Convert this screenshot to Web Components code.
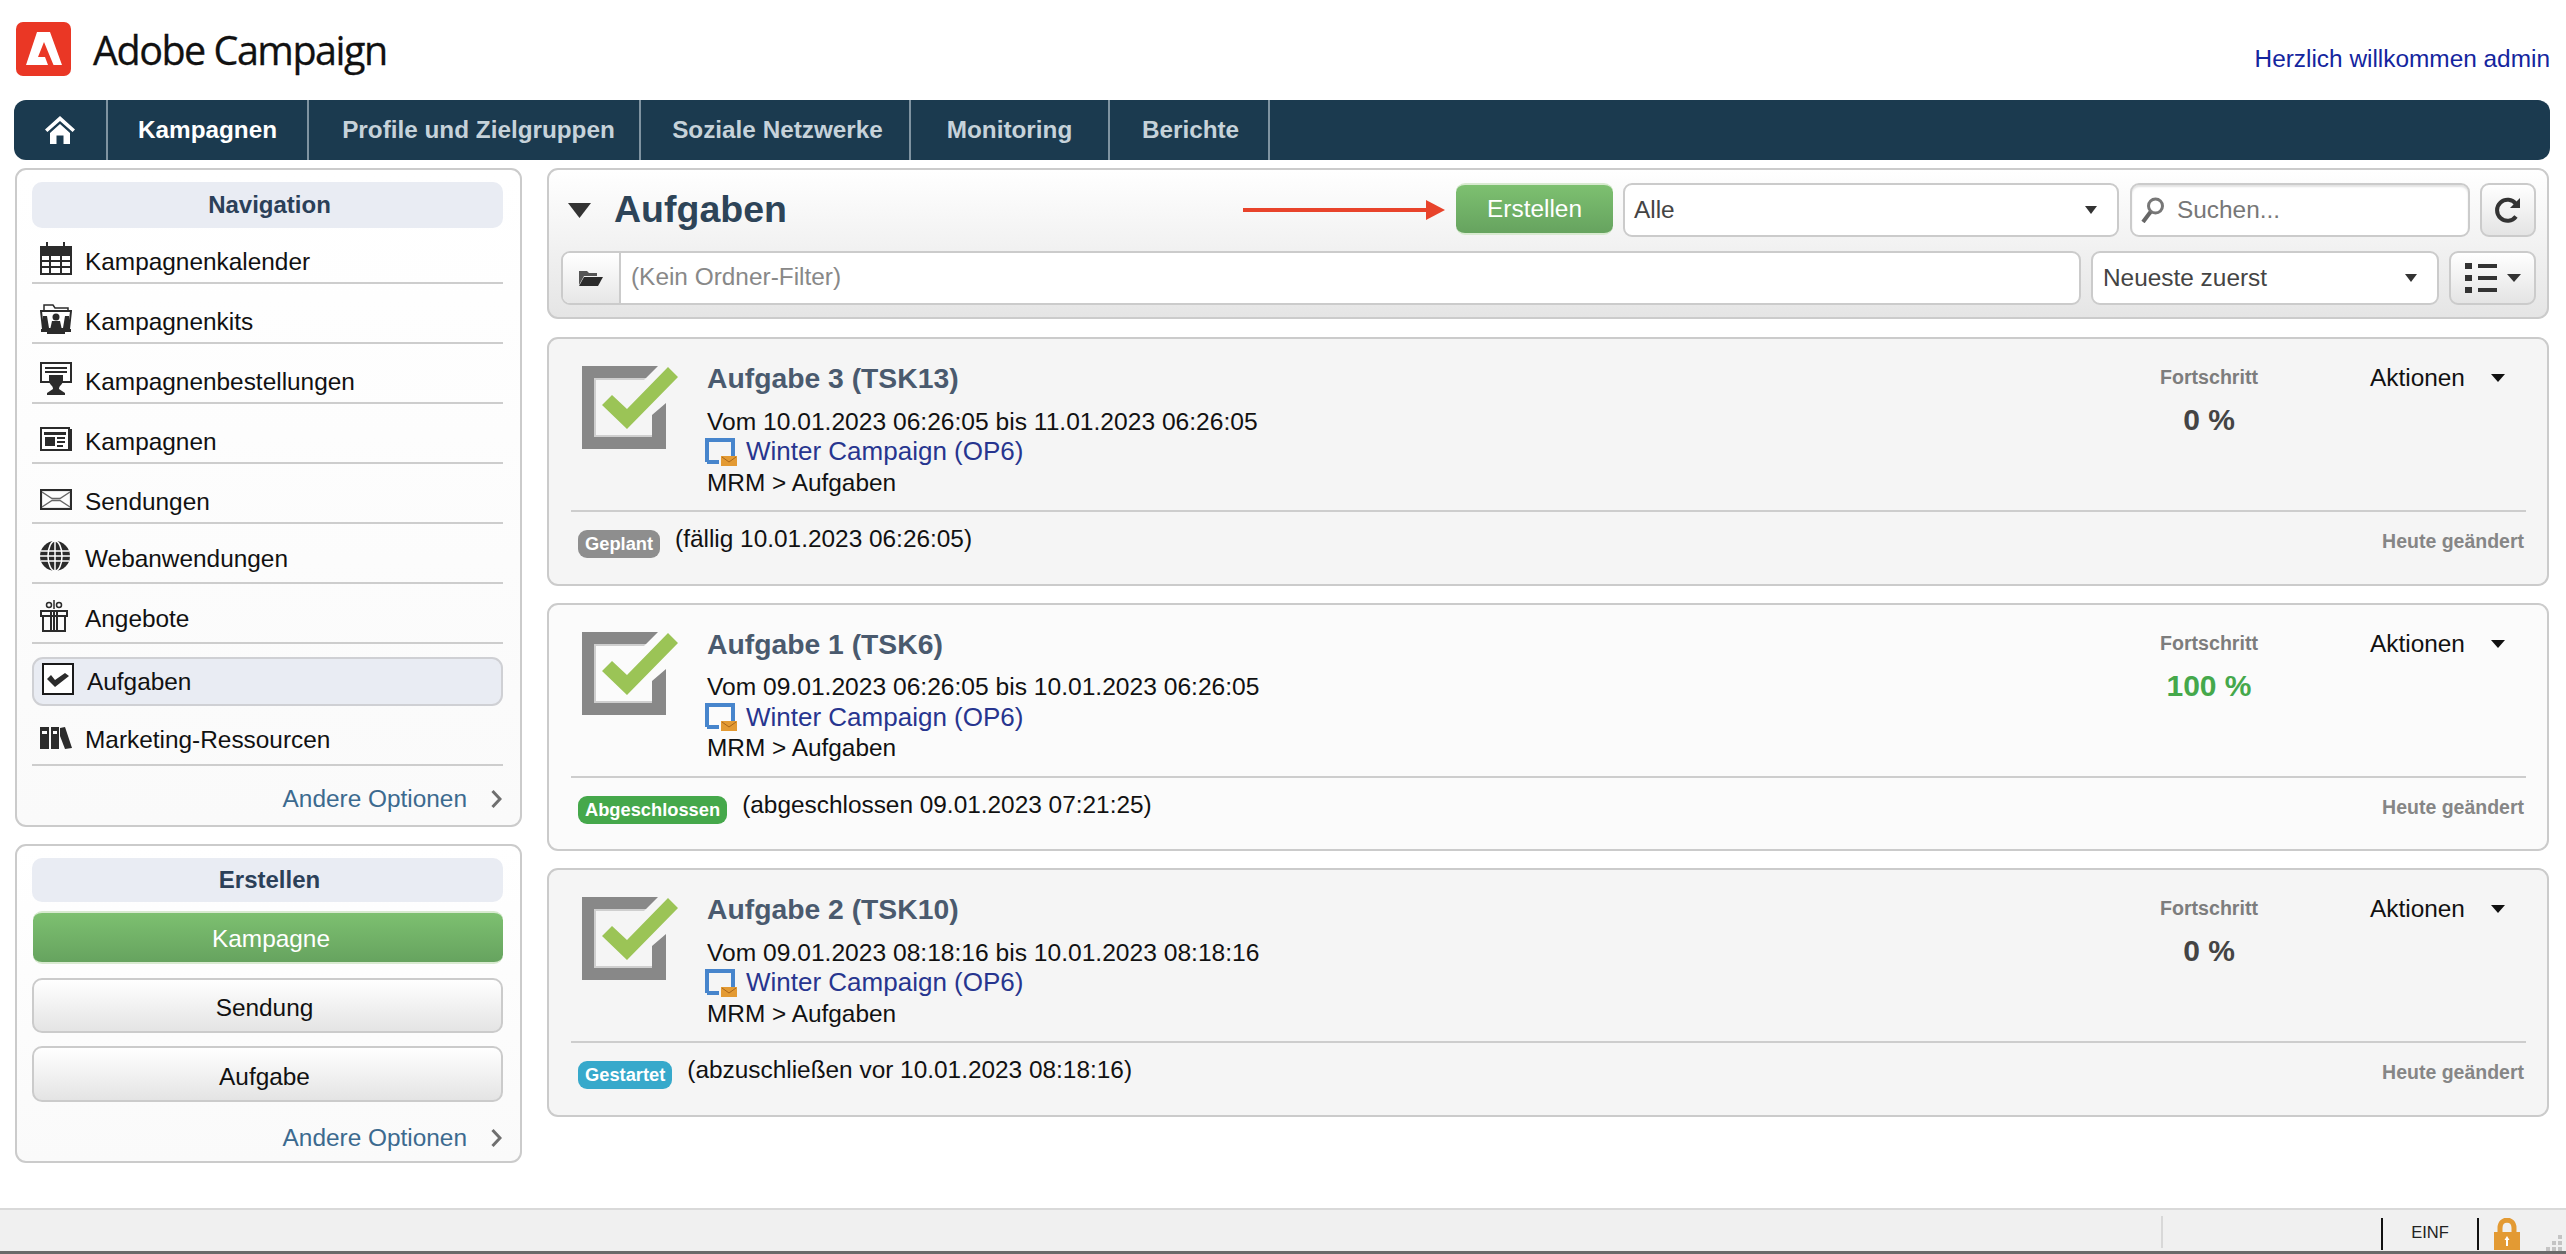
<!DOCTYPE html>
<html lang="de">
<head>
<meta charset="utf-8">
<title>Adobe Campaign</title>
<style>
  html, body { margin: 0; height: 100%; background: #fff; }
  body { font: 24.4px "Liberation Sans", Arial, sans-serif; color: #111; overflow: hidden; }
</style>
</head>
<body>
<ac-app>
  <ac-header></ac-header>
  <ac-nav>
    <ac-nav-item icon="home" style="width:94px"></ac-nav-item>
    <ac-nav-item active style="width:201px">Kampagnen</ac-nav-item>
    <ac-nav-item style="width:332px;padding-left:9px">Profile und Zielgruppen</ac-nav-item>
    <ac-nav-item style="width:270px;padding-left:5px">Soziale Netzwerke</ac-nav-item>
    <ac-nav-item style="width:199px">Monitoring</ac-nav-item>
    <ac-nav-item style="width:160px;padding-left:3px">Berichte</ac-nav-item>
  </ac-nav>
  <ac-layout>
    <ac-sidebar slot="side">
      <ac-panel heading="Navigation" style="--pb:3px">
        <ac-nav-row icon="calendar">Kampagnenkalender</ac-nav-row>
        <ac-nav-row icon="kits">Kampagnenkits</ac-nav-row>
        <ac-nav-row icon="orders">Kampagnenbestellungen</ac-nav-row>
        <ac-nav-row icon="news">Kampagnen</ac-nav-row>
        <ac-nav-row icon="mail">Sendungen</ac-nav-row>
        <ac-nav-row icon="globe" style="padding-top:12px">Webanwendungen</ac-nav-row>
        <ac-nav-row icon="gift" style="padding-top:12px">Angebote</ac-nav-row>
        <ac-nav-row icon="check" selected>Aufgaben</ac-nav-row>
        <ac-nav-row icon="books" tight>Marketing-Ressourcen</ac-nav-row>
        <ac-more style="margin-top:10px"></ac-more>
      </ac-panel>
      <ac-panel heading="Erstellen" style="--pb:0px;--hh:44px">
        <ac-button primary style="height:53px;margin:9px 0 14px 1px;width:470px;padding:3px 0 0 6px">Kampagne</ac-button>
        <ac-button style="height:55px;margin-bottom:13px;padding:5px 6px 0 0">Sendung</ac-button>
        <ac-button style="height:56px;padding:5px 6px 0 0">Aufgabe</ac-button>
        <ac-more style="margin-top:13px"></ac-more>
      </ac-panel>
    </ac-sidebar>
    <ac-toolbar></ac-toolbar>
    <ac-task-card name="Aufgabe 3" code="(TSK13)" dates="Vom 10.01.2023 06:26:05 bis 11.01.2023 06:26:05"
      progress="0 %" status="Geplant" tone="#8e8e8e" note="(fällig 10.01.2023 06:26:05)"></ac-task-card>
    <ac-task-card name="Aufgabe 1" code="(TSK6)" dates="Vom 09.01.2023 06:26:05 bis 10.01.2023 06:26:05" light
      progress="100 %" done status="Abgeschlossen" tone="#45a84b" note="(abgeschlossen 09.01.2023 07:21:25)"></ac-task-card>
    <ac-task-card name="Aufgabe 2" code="(TSK10)" dates="Vom 09.01.2023 08:18:16 bis 10.01.2023 08:18:16"
      progress="0 %" status="Gestartet" tone="#37a9cb" note="(abzuschließen vor 10.01.2023 08:18:16)"></ac-task-card>
  </ac-layout>
  <ac-status-bar></ac-status-bar>
</ac-app>

<script>
// all the little pictograms in one place
const ICONS = {
  home: `<svg width="30" height="28" viewBox="0 0 30 28" fill="#fff"><path d="M15 0 30 13.5 27.6 16 15 5 2.400 16 0 13.500Z"/><path d="M5 17 15 8 25 17V28H18.500V19.500H11.500V28H5Z"/></svg>`,
  calendar: `<svg width="32" height="33" viewBox="0 0 32 33" fill="#2b2b2b"><rect x="6" width="2" height="6"/><rect x="23" width="2" height="6"/><rect y="4" width="32" height="8"/><path fill-rule="evenodd" d="M0 12H32V33H0ZM2 14V18H9V14ZM11 14V18H20V14ZM22 14V18H30V14ZM2 20V24H9V20ZM11 20V24H20V20ZM22 20V24H30V20ZM2 26V31H9V26ZM11 26V31H20V26ZM22 26V31H30V26Z"/></svg>`,
  kits: `<svg width="32" height="30" viewBox="0 0 32 30" fill="#2b2b2b"><path d="M4 8V1H13L15 4H28V8" fill="none" stroke="#2b2b2b" stroke-width="1.500"/><path d="M1 7H31L29 25H3Z" fill="#fff" stroke="#2b2b2b" stroke-width="2"/><path d="M3 12 7 12 9 24 3 24ZM29 12 25 12 23 24 29 24Z"/><circle cx="16" cy="13" r="3.500"/><path d="M10 26 12 17H20L22 26Z"/><rect x="1" y="25" width="30" height="3"/><rect x="7" y="28" width="18" height="2"/></svg>`,
  orders: `<svg width="32" height="33" viewBox="0 0 32 33" fill="#2b2b2b"><rect x="1" y="1" width="30" height="19" fill="#fff" stroke="#2b2b2b" stroke-width="2"/><rect x="5" y="5" width="22" height="2"/><rect x="5" y="9" width="22" height="2"/><path d="M9 13H23V18C23 23 19 23 19 27L25 31V33H7V31L13 27C13 23 9 23 9 18Z"/></svg>`,
  news: `<svg width="32" height="24" viewBox="0 0 32 24" fill="#2b2b2b"><path d="M28 2H32V24H28Z"/><rect x="1" y="1" width="28" height="22" fill="#fff" stroke="#2b2b2b" stroke-width="2"/><rect x="4" y="5" width="22" height="3"/><rect x="5" y="10" width="10" height="9"/><rect x="17" y="10" width="8" height="2"/><rect x="17" y="14" width="8" height="2"/><rect x="17" y="18" width="6" height="2"/></svg>`,
  mail: `<svg width="32" height="21" viewBox="0 0 32 21" fill="none" stroke="#2b2b2b"><rect x="1" y="1" width="30" height="19" stroke-width="2.200"/><path d="M2 3 12 9.500H20L30 3M2 18 12 11.500H20L30 18" stroke-width="1.400" stroke="#666"/></svg>`,
  globe: `<svg width="30" height="30" viewBox="0 0 30 30"><circle cx="15" cy="15" r="15" fill="#2b2b2b"/><g fill="none" stroke="#fff" stroke-width="1.500"><path d="M1 10H29M0 15H30M1 20H29M15 0V30"/><ellipse cx="15" cy="15" rx="7" ry="15"/></g></svg>`,
  gift: `<svg width="28" height="32" viewBox="0 0 28 32" fill="none" stroke="#2b2b2b" stroke-width="2"><rect x="1" y="11" width="26" height="5"/><path d="M3 16V31H25V16M14 11V31M11 11V31M17 11V31"/><circle cx="9" cy="5" r="2.500" stroke-width="1.500"/><circle cx="19" cy="5" r="2.500" stroke-width="1.500"/><path d="M14 0V9" stroke-width="1.500"/></svg>`,
  check: `<svg width="32" height="32" viewBox="0 0 32 32"><rect x="1" y="1" width="30" height="30" fill="#fff" stroke="#1a1a1a" stroke-width="2"/><path d="M5 16 9 12 13 17 23 10 27 13 13 24Z" fill="#2b2b2b"/></svg>`,
  books: `<svg width="32" height="23" viewBox="0 0 32 23" fill="#2b2b2b"><path fill-rule="evenodd" d="M0 1H9V23H0ZM2 5V8H7V5Z"/><path fill-rule="evenodd" d="M11 1H19V23H11ZM13 5V8H17V5Z"/><path d="M20 2 25 1 32 22 25 23 20 10Z"/></svg>`
};

class AcIcon extends HTMLElement {
  constructor() {
    super();
    this.attachShadow({ mode: "open" });
  }

  connectedCallback() {
    const name = this.getAttribute("name");
    this.shadowRoot.innerHTML = `
      <style>
        :host { display: inline-flex; align-items: center; line-height: 0; }
      </style>
      ${ICONS[name] || ""}
    `;
  }
}

class AcApp extends HTMLElement {
  constructor() {
    super();
    this.attachShadow({ mode: "open" });
    this.shadowRoot.innerHTML = `
      <style>
        :host { display: flex; flex-direction: column; height: 100vh; }
        ::slotted(ac-status-bar) { margin-top: auto; }
      </style>
      <slot></slot>
    `;
  }
}

class AcHeader extends HTMLElement {
  constructor() {
    super();
    this.attachShadow({ mode: "open" });
    this.shadowRoot.innerHTML = `
      <style>
        :host { display: flex; height: 100px; padding: 22px 16px 0 16px; box-sizing: border-box; }
        .brand {
          margin: 2px 0 0 22px;
          font: 39.500px/52px "Open Sans", sans-serif;
          letter-spacing: -1.500px;
          color: #111;
          -webkit-text-stroke: 0.3px #111;
        }
        a {
          margin-left: auto;
          margin-top: 23px;
          line-height: 28px;
          color: #14259e;
          text-decoration: none;
          font-size: 24.400px;
        }
      </style>
      <svg width="55" height="54" viewBox="0 0 55 54">
        <rect width="55" height="54" rx="7" fill="#ea3725"/>
        <path fill="#fff" d="M21 10H34L46 43H37.500L28 20 22 35H29L32 43H10Z"/>
      </svg>
      <span class="brand">Adobe Campaign</span>
      <a>Herzlich willkommen admin</a>
    `;
  }
}

class AcNav extends HTMLElement {
  constructor() {
    super();
    this.attachShadow({ mode: "open" });
    this.shadowRoot.innerHTML = `
      <style>
        :host {
          display: flex;
          height: 60px;
          margin: 0 16px 8px 14px;
          background: #1b3a4f;
          border-radius: 12px;
          overflow: hidden;
        }
      </style>
      <slot></slot>
    `;
  }
}

class AcNavItem extends HTMLElement {
  constructor() {
    super();
    this.attachShadow({ mode: "open" });
  }

  connectedCallback() {
    const icon = this.getAttribute("icon");
    this.shadowRoot.innerHTML = `
      <style>
        :host {
          display: flex;
          align-items: center;
          justify-content: center;
          box-sizing: border-box;
          border-right: 2px solid #7f93a1;
          font-size: 24.300px;
          font-weight: bold;
          color: #c6d2da;
        }
        :host([active]) { color: #fff; }
      </style>
      ${icon ? `<ac-icon name="${icon}"></ac-icon>` : ""}
      <slot></slot>
    `;
  }
}

class AcLayout extends HTMLElement {
  constructor() {
    super();
    this.attachShadow({ mode: "open" });
    this.shadowRoot.innerHTML = `
      <style>
        :host { display: flex; gap: 25px; padding: 0 17px 0 15px; }
        main { flex: 1; min-width: 0; display: flex; flex-direction: column; gap: 17px; }
        ::slotted(ac-toolbar) { margin-bottom: 1px; }
      </style>
      <slot name="side"></slot>
      <main><slot></slot></main>
    `;
  }
}

class AcSidebar extends HTMLElement {
  constructor() {
    super();
    this.attachShadow({ mode: "open" });
    this.shadowRoot.innerHTML = `
      <style>
        :host { display: flex; flex-direction: column; gap: 17px; width: 507px; flex: none; }
      </style>
      <slot></slot>
    `;
  }
}

class AcPanel extends HTMLElement {
  constructor() {
    super();
    this.attachShadow({ mode: "open" });
  }

  connectedCallback() {
    this.shadowRoot.innerHTML = `
      <style>
        :host {
          display: flex;
          flex-direction: column;
          box-sizing: border-box;
          padding: 12px 17px var(--pb, 0) 15px;
          border: 2px solid #cbcbcb;
          border-radius: 11px;
          background: linear-gradient(#fff, #fafafa);
        }
        h2 {
          margin: 0;
          height: var(--hh, 46px);
          padding-left: 4px;
          line-height: var(--hh, 46px);
          text-align: center;
          font-size: 24px;
          font-weight: bold;
          color: #2b4058;
          background: #e9ecf3;
          border-radius: 10px;
        }
        ::slotted(ac-nav-row:first-of-type) { margin-top: -4px; }
      </style>
      <h2>${this.getAttribute("heading")}</h2>
      <slot></slot>
    `;
  }
}

class AcNavRow extends HTMLElement {
  constructor() {
    super();
    this.attachShadow({ mode: "open" });
  }

  connectedCallback() {
    this.shadowRoot.innerHTML = `
      <style>
        :host {
          display: flex;
          align-items: center;
          box-sizing: border-box;
          height: 60px;
          padding: 17px 0 0 8px;
          border-bottom: 2px solid #cdcdcd;
        }
        :host([tight]) { height: 60px; padding-top: 10px; }
        :host([selected]) {
          height: 49px;
          margin-top: 13px;
          padding-top: 0;
          padding-left: 8px;
          border: 2px solid #cfd0d4;
          border-radius: 11px;
          background: #e9ecf3;
        }
        .ico { width: 45px; flex: none; }
      </style>
      <span class="ico"><ac-icon name="${this.getAttribute("icon")}"></ac-icon></span>
      <slot></slot>
    `;
  }
}

class AcMore extends HTMLElement {
  constructor() {
    super();
    this.attachShadow({ mode: "open" });
    this.shadowRoot.innerHTML = `
      <style>
        :host {
          display: flex;
          align-items: center;
          justify-content: flex-end;
          gap: 24px;
          height: 46px;
          padding-right: 1px;
          color: #3c6a8f;
        }
      </style>
      <span>Andere Optionen</span>
      <svg width="11" height="20" viewBox="0 0 11 20" fill="none" stroke="#6f6f6f" stroke-width="3"><path d="M1.500 2 9 10 1.500 18"/></svg>
    `;
  }
}

class AcButton extends HTMLElement {
  constructor() {
    super();
    this.attachShadow({ mode: "open" });
    this.shadowRoot.innerHTML = `
      <style>
        :host {
          display: flex;
          align-items: center;
          justify-content: center;
          box-sizing: border-box;
          border: 2px solid #cbcbcb;
          border-radius: 10px;
          background: linear-gradient(#fff, #e4e4e4);
          color: #111;
          flex: none;
        }
        :host([primary]) {
          border: 0;
          border-top: 2px solid #d8ead0;
          border-bottom: 2px solid #d8ead0;
          border-radius: 9px;
          background: linear-gradient(#7dc070, #66a35f);
          color: #fff;
        }
      </style>
      <slot></slot>
    `;
  }
}

class AcToolbar extends HTMLElement {
  constructor() {
    super();
    this.attachShadow({ mode: "open" });
    const caret = `<svg class="caret" width="12" height="8" viewBox="0 0 12 8" fill="#333"><path d="M0 0H12L6 8Z"/></svg>`;
    this.shadowRoot.innerHTML = `
      <style>
        :host {
          display: block;
          box-sizing: border-box;
          height: 151px;
          padding: 13px 11px 0 12px;
          border: 2px solid #cbcbcb;
          border-radius: 11px;
          background: linear-gradient(#fff, #e5e5e5);
        }
        .row { display: flex; align-items: flex-start; }
        .row + .row { margin-top: 14px; }
        .turn { margin: 20px 23px 0 7px; flex: none; }
        h1 { margin: 2px 0 0; font-size: 37.500px; line-height: 48px; color: #2d4458; font-weight: bold; }
        .arrow { margin: 17px 11px 0 auto; flex: none; }
        ac-button { height: 52px; width: 157px; margin-right: 10px; }
        .box {
          display: flex;
          align-items: center;
          box-sizing: border-box;
          height: 54px;
          border: 2px solid #cbcbcb;
          border-radius: 9px;
          background: #fff;
          color: #444;
          flex: none;
          padding: 0 20px 0 9px;
        }
        .caret { margin-left: auto; }
        .search { color: #777; padding: 0 0 0 9px; box-shadow: inset 0 2px 2px #e2e2e2; }
        .search svg { margin-right: 12px; }
        .btn {
          display: flex;
          align-items: center;
          justify-content: center;
          box-sizing: border-box;
          height: 54px;
          border: 2px solid #cbcbcb;
          border-radius: 9px;
          background: linear-gradient(#fff, #e4e4e4);
          flex: none;
        }
        .filter { display: flex; flex: 1; height: 54px; box-sizing: border-box; border: 2px solid #cbcbcb; border-radius: 9px; background: #fff; margin-right: 10px; overflow: hidden; }
        .filter .folder { width: 58px; display: flex; align-items: center; justify-content: center; border-right: 2px solid #cbcbcb; background: linear-gradient(#fff, #e6e6e6); padding-right: 2px; box-sizing: border-box; }
        .filter span { padding-left: 10px; line-height: 48px; color: #888; }
      </style>
      <div class="row">
        <svg class="turn" width="23" height="15" viewBox="0 0 23 15" fill="#333"><path d="M0 0H23L11.500 15Z"/></svg>
        <h1>Aufgaben</h1>
        <svg class="arrow" width="202" height="20" viewBox="0 0 202 20" fill="#e8432b"><rect y="8" width="186" height="4"/><path d="M183 0 202 10 183 20Z"/></svg>
        <ac-button primary>Erstellen</ac-button>
        <div class="box" style="width:496px;margin-right:11px">Alle${caret}</div>
        <div class="box search" style="width:340px;margin-right:10px">
          <svg width="24" height="26" viewBox="0 0 24 26" fill="none" stroke="#777"><circle cx="14.500" cy="9" r="7" stroke-width="3"/><path d="M9.500 15 2 25" stroke-width="4" stroke="#666"/></svg>
          Suchen...
        </div>
        <div class="btn" style="width:56px">
          <svg width="26" height="26" viewBox="0 0 26 26" fill="none"><path d="M21 7A10.500 10.500 0 1 0 21 19.500" stroke="#333" stroke-width="4"/><path d="M25 1V11H15Z" fill="#333"/></svg>
        </div>
      </div>
      <div class="row">
        <div class="filter">
          <div class="folder"><svg width="25" height="16" viewBox="0 0 25 16"><path d="M1 15V1H9L11 3H19V6H6L1 15Z" fill="#555"/><path d="M6 7H25L20 16H1Z" fill="#2b2b2b"/></svg></div>
          <span>(Kein Ordner-Filter)</span>
        </div>
        <div class="box" style="width:348px;margin-right:10px;padding:0 20px 0 10px">Neueste zuerst${caret}</div>
        <div class="btn" style="width:87px;gap:10px">
          <svg width="32" height="30" viewBox="0 0 32 30" fill="#333"><rect width="7" height="6"/><rect x="13" y="1" width="19" height="4"/><rect y="12" width="7" height="6"/><rect x="13" y="13" width="19" height="4"/><rect y="24" width="7" height="6"/><rect x="13" y="25" width="19" height="4"/></svg>
          <svg width="14" height="8" viewBox="0 0 14 8" fill="#333"><path d="M0 0H14L7 8Z"/></svg>
        </div>
      </div>
    `;
  }
}

class AcTaskCard extends HTMLElement {
  constructor() {
    super();
    this.attachShadow({ mode: "open" });
  }

  connectedCallback() {
    const attr = (n) => this.getAttribute(n);
    this.shadowRoot.innerHTML = `
      <style>
        :host {
          display: block;
          box-sizing: border-box;
          height: 248.500px;
          border: 2px solid #cbcbcb;
          border-radius: 11px;
          background: #f5f5f5;
        }
        :host([light]) { background: #fbfbfb; }
        .top { display: flex; height: 171px; box-sizing: border-box; padding: 21px 42px 0 33px; }
        .task { flex: none; margin: 6px 29px 0 0; }
        .body { flex: 1; min-width: 0; }
        h3 { margin: 1px 0 10px; font-size: 28.300px; line-height: 34px; color: #4a5a6e; font-weight: bold; }
        .line { line-height: 31.500px; margin-top: -1px; }
        .dates { font-size: 24.600px; margin-top: 0; padding-top: 0.500px; }
        .camp { display: flex; align-items: center; color: #27358f; font-size: 26px; }
        .camp svg { margin: 0 9px 0 -2px; flex: none; }
        .prog { flex: none; width: 120px; text-align: center; padding-top: 5px; }
        .prog small { display: block; font-size: 19.600px; font-weight: bold; line-height: 24px; color: #7d7d7d; }
        .prog b { display: block; margin-top: 13px; font-size: 30px; line-height: 36px; color: #444; }
        :host([done]) .prog b { color: #45a84b; }
        .act { flex: none; width: 135px; margin-left: 101px; display: flex; justify-content: space-between; align-items: center; height: 32px; margin-top: 2px; }
        hr { margin: 0 21px 0 22px; border: 0; border-top: 2px solid #cdcdcd; }
        .foot { display: flex; padding: 18px 23px 0 29px; }
        .pill {
          height: 28px;
          line-height: 27px;
          padding: 0 7px;
          border-radius: 9px;
          color: #fff;
          font-size: 18.300px;
          font-weight: bold;
          flex: none;
        }
        .note { margin: -5px 0 0 15px; line-height: 28px; }
        .changed { margin-left: auto; margin-top: -3px; line-height: 28px; font-size: 19.500px; font-weight: bold; color: #868686; }
      </style>
      <div class="top">
        <svg class="task" width="96" height="84" viewBox="0 0 96 84">
          <path fill="#888" d="M0 0H76L64 12H12V71H70V49L84 37V83H0Z"/>
          <path fill="#cfcfcf" d="M12 12H64L62 14H14V69H70V71H12Z"/>
          <path fill="#9bc456" d="M20 39 30 29 45 43 86 1 96 11 45 63Z"/>
        </svg>
        <div class="body">
          <h3>${attr("name")} ${attr("code")}</h3>
          <div class="line dates">${attr("dates")}</div>
          <div class="line camp">
            <svg width="32" height="28" viewBox="0 0 32 28"><path fill="none" stroke="#4785cc" stroke-width="4" d="M2 24V2H28V18M2 24H14"/><rect x="16" y="18" width="16" height="10" fill="#e39a33"/><path fill="none" stroke="#a9661a" d="M17 19 24 24 31 19"/></svg>
            Winter Campaign (OP6)
          </div>
          <div class="line">MRM &gt; Aufgaben</div>
        </div>
        <div class="prog"><small>Fortschritt</small><b>${attr("progress")}</b></div>
        <div class="act">Aktionen
          <svg width="14" height="8" viewBox="0 0 14 8" fill="#111"><path d="M0 0H14L7 8Z"/></svg>
        </div>
      </div>
      <hr>
      <div class="foot">
        <span class="pill" style="background:${attr("tone")}">${attr("status")}</span>
        <span class="note">${attr("note")}</span>
        <span class="changed">Heute geändert</span>
      </div>
    `;
  }
}

class AcStatusBar extends HTMLElement {
  constructor() {
    super();
    this.attachShadow({ mode: "open" });
    this.shadowRoot.innerHTML = `
      <style>
        :host {
          display: flex;
          box-sizing: border-box;
          height: 46px;
          padding-top: 6px;
          border-top: 2px solid #d9d9d9;
          border-bottom: 3px solid #6a6a6a;
          background: #f0f0f0;
          position: relative;
        }
        .soft { width: 2px; height: 32px; background: #d8d8d8; margin-left: 2161px; }
        .hard { width: 2px; height: 32px; margin-top: 2px; background: #111; }
        .einf { width: 94px; text-align: center; font-size: 16.500px; line-height: 32px; color: #222; }
        .lock { margin: 2px 0 0 15px; }
        .grip { position: absolute; right: 4px; bottom: 0; }
      </style>
      <div class="soft"></div>
      <div class="hard" style="margin-left:218px"></div>
      <div class="einf">EINF</div>
      <div class="hard"></div>
      <svg class="lock" width="26" height="32" viewBox="0 0 26 32">
        <path fill="none" stroke="#e39a33" stroke-width="5" d="M6 15V10C6 -0.500 20 -0.500 20 10V15"/>
        <rect y="14" width="26" height="18" fill="#e39a33"/>
        <path fill="#fff" d="M13 18 15.500 22H14V28H12V22H10.500Z"/>
      </svg>
      <svg class="grip" width="16" height="16" viewBox="0 0 16 16" fill="#c4c4c4"><rect x="12" y="0" width="4" height="4"/><rect x="6" y="6" width="4" height="4"/><rect x="12" y="6" width="4" height="4"/><rect x="0" y="12" width="4" height="4"/><rect x="6" y="12" width="4" height="4"/><rect x="12" y="12" width="4" height="4"/></svg>
    `;
  }
}

customElements.define("ac-icon", AcIcon);
customElements.define("ac-app", AcApp);
customElements.define("ac-header", AcHeader);
customElements.define("ac-nav", AcNav);
customElements.define("ac-nav-item", AcNavItem);
customElements.define("ac-layout", AcLayout);
customElements.define("ac-sidebar", AcSidebar);
customElements.define("ac-panel", AcPanel);
customElements.define("ac-nav-row", AcNavRow);
customElements.define("ac-more", AcMore);
customElements.define("ac-button", AcButton);
customElements.define("ac-toolbar", AcToolbar);
customElements.define("ac-task-card", AcTaskCard);
customElements.define("ac-status-bar", AcStatusBar);
</script>
</body>
</html>
